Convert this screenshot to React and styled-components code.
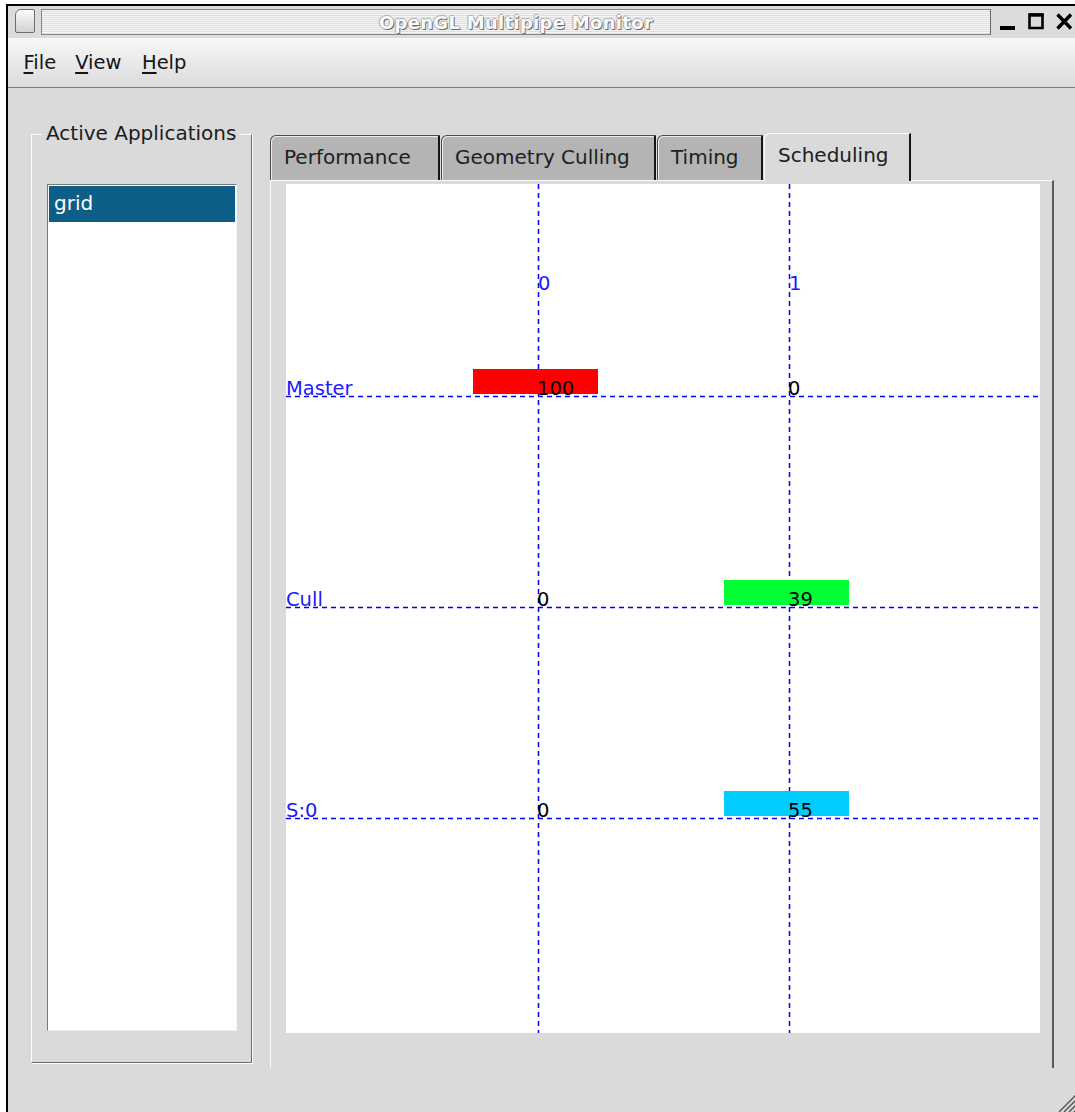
import React from "react";
import styled, { createGlobalStyle, css } from "styled-components";

const GlobalStyle = createGlobalStyle`
  html, body {
    margin: 0;
    padding: 0;
    background: #ffffff;
    overflow: hidden;
  }
  body {
    font-family: "DejaVu Sans", "Liberation Sans", sans-serif;
  }
`;

const Window = styled.div`
  position: relative;
  margin: 4px 0 0 6px;
  width: 1070px;
  height: 1108px;
  box-sizing: border-box;
  border-top: 2px solid #000;
  border-left: 2px solid #000;
  background: #dadada;
  display: flex;
  flex-direction: column;
`;

const TitleBar = styled.div`
  height: 32px;
  flex: none;
  display: flex;
  align-items: flex-start;
  padding: 3px 4px 0 7px;
  box-sizing: border-box;
  background: #dcdcdc;
`;

const WinMenuButton = styled.div`
  width: 20px;
  height: 24px;
  box-sizing: border-box;
  border: 1px solid #6d6d6d;
  border-radius: 6px 2px 2px 2px;
  background: linear-gradient(#fbfbfb, #d2d2d2);
  flex: none;
`;

const TitleField = styled.div`
  flex: 1;
  height: 26px;
  margin-left: 6px;
  box-sizing: border-box;
  border: 1px solid #868686;
  border-right-color: #6a6a6a;
  background: repeating-linear-gradient(
    to bottom,
    #f5f5f5 0px,
    #f5f5f5 1px,
    #e0e0e0 1px,
    #e0e0e0 2px
  );
  display: flex;
  align-items: center;
  justify-content: center;
`;

const TitleText = styled.span`
  font-family: "DejaVu Sans", sans-serif;
  font-weight: bold;
  font-size: 18px;
  letter-spacing: 0.3px;
  color: #fafafa;
  text-shadow: 1px 1px 0 #6a6a6a, -1px 0 0 #a8a8a8, 0 -1px 0 #b0b0b0;
`;

const WinButtons = styled.div`
  display: flex;
  gap: 12px;
  margin-left: 9px;
  margin-top: 4px;
  flex: none;
`;

const WinButton = styled.svg`
  display: block;
  width: 16px;
  height: 18px;
`;

const MenuBar = styled.div`
  height: 50px;
  flex: none;
  box-sizing: border-box;
  display: flex;
  align-items: center;
  padding-left: 6px;
  background: linear-gradient(#f7f7f7, #dcdcdc);
  border-bottom: 1px solid #7c7c7c;
`;

const MenuItem = styled.span`
  padding: 0 ${(p) => p.$pad || 9.5}px;
  font-size: 19.5px;
  color: #151515;
`;

const Mnemonic = styled.span`
  text-decoration: underline;
  text-decoration-thickness: 2px;
  text-underline-offset: 3px;
`;

const Body = styled.div`
  flex: 1;
  display: flex;
  align-items: flex-start;
  padding-left: 23px;
`;

const GroupBox = styled.div`
  position: relative;
  margin-top: 46px;
  width: 221px;
  box-sizing: border-box;
  border: 1px solid;
  border-color: #fdfdfd #6c6c6c #6c6c6c #fdfdfd;
  box-shadow: 1px 1px 0 #ffffff;
  padding: 49px 14px 31px 15px;
`;

const GroupTitle = styled.span`
  position: absolute;
  top: -14px;
  left: 10px;
  padding: 0 4px;
  background: #dadada;
  font-size: 20px;
  line-height: 24px;
  color: #1c1c1c;
  white-space: nowrap;
`;

const ListBox = styled.div`
  height: 847px;
  box-sizing: border-box;
  border: 1px solid;
  border-color: #7a7a7a #f7f7f7 #f0f0f0 #7a7a7a;
  background: #ffffff;
  padding: 1px;
`;

const ListRow = styled.div`
  height: 36px;
  line-height: 35px;
  padding-left: 5px;
  font-size: 20px;
  ${(p) =>
    p.$selected
      ? css`
          background: #0c5e86;
          color: #ffffff;
        `
      : css`
          color: #111;
        `}
`;

const TabWidget = styled.div`
  margin-top: 45px;
  margin-left: 18px;
  width: 784px;
  display: flex;
  flex-direction: column;
`;

const TabBar = styled.div`
  height: 47px;
  display: flex;
  align-items: flex-end;
  gap: 1px;
`;

const Tab = styled.div`
  width: ${(p) => p.$width}px;
  box-sizing: border-box;
  display: flex;
  align-items: center;
  padding-left: 13px;
  font-size: 20px;
  color: #202020;
  border-top-left-radius: 6px;
  border-right: 2px solid #151515;
  ${(p) =>
    p.$active
      ? css`
          position: relative;
          z-index: 1;
          height: 48px;
          margin-bottom: -1px;
          padding-bottom: 6px;
          background: #dadada;
          border-top: 1px solid #fbfbfb;
          border-left: 1px solid #fbfbfb;
        `
      : css`
          height: 45px;
          padding-bottom: 3px;
          background: #b4b4b4;
          border-top: 1px solid #4c4c4c;
          border-left: 1px solid #4c4c4c;
          box-shadow: inset 1px 1px 0 #ececec;
        `}
`;

const Pane = styled.div`
  height: 888px;
  box-sizing: border-box;
  border-top: 1px solid #fbfbfb;
  border-left: 1px solid #fbfbfb;
  border-right: 2px solid #5a5a5a;
  padding: 3px 12px 0 15px;
`;

const Chart = styled.svg`
  display: block;
  background: #ffffff;
`;

const SizeGrip = styled.svg`
  position: absolute;
  right: 0;
  bottom: 0;
  width: 18px;
  height: 20px;
`;

const TABS = [
  { name: "Performance", width: 170 },
  { name: "Geometry Culling", width: 215 },
  { name: "Timing", width: 106 },
  { name: "Scheduling", width: 147, active: true },
];

const CHART_W = 754;
const CHART_H = 849;

const COLUMNS = [
  { x: 252, label: "0" },
  { x: 503, label: "1" },
];

const ROWS = [
  { y: 212, label: "Master", values: ["100", "0"], bar: { col: 0, color: "#ff0000" } },
  { y: 423, label: "Cull", values: ["0", "39"], bar: { col: 1, color: "#00ff33" } },
  { y: 634, label: "S:0", values: ["0", "55"], bar: { col: 1, color: "#00ccff" } },
];

const GRID = "#0000ff";
const LABEL_FONT = '"DejaVu Sans", sans-serif';

function SchedulingChart() {
  return (
    <Chart width={CHART_W} height={CHART_H} viewBox={`0 0 ${CHART_W} ${CHART_H}`}>
      {COLUMNS.map((c) => (
        <line
          key={`v${c.x}`}
          x1={c.x + 0.5}
          y1={0}
          x2={c.x + 0.5}
          y2={CHART_H}
          stroke={GRID}
          strokeWidth={1.5}
          strokeDasharray="5 4"
        />
      ))}
      {ROWS.map((r) => (
        <line
          key={`h${r.y}`}
          x1={0}
          y1={r.y + 0.5}
          x2={CHART_W}
          y2={r.y + 0.5}
          stroke={GRID}
          strokeWidth={1.5}
          strokeDasharray="5 4"
        />
      ))}
      {ROWS.map((r) => (
        <rect
          key={`b${r.y}`}
          x={COLUMNS[r.bar.col].x - 65}
          y={r.y - 27}
          width={125}
          height={25}
          fill={r.bar.color}
        />
      ))}
      {COLUMNS.map((c) => (
        <text key={`c${c.x}`} x={c.x} y={106} fill="#1a1aff" fontFamily={LABEL_FONT} fontSize={19.5}>
          {c.label}
        </text>
      ))}
      {ROWS.map((r) => (
        <g key={`t${r.y}`} fontFamily={LABEL_FONT} fontSize={19.5}>
          <text x={0} y={r.y - 1} fill="#1a1aff">
            {r.label}
          </text>
          {r.values.map((v, i) => (
            <text key={i} x={COLUMNS[i].x - 1} y={r.y - 1} fill="#000000">
              {v}
            </text>
          ))}
        </g>
      ))}
    </Chart>
  );
}

export default function App() {
  return (
    <>
      <GlobalStyle />
      <Window>
        <TitleBar>
          <WinMenuButton />
          <TitleField>
            <TitleText>OpenGL Multipipe Monitor</TitleText>
          </TitleField>
          <WinButtons>
            <WinButton viewBox="0 0 16 18">
              <rect x="0" y="13" width="15" height="4" fill="#000" />
            </WinButton>
            <WinButton viewBox="0 0 16 18">
              <path d="M1.5 1.5 H14.5 V15 H1.5 Z" fill="none" stroke="#000" strokeWidth="2.6" />
              <rect x="1" y="0.5" width="14.5" height="3.2" fill="#000" />
            </WinButton>
            <WinButton viewBox="0 0 16 18">
              <path d="M1.5 1.5 L15 15.5 M15 1.5 L1.5 15.5" stroke="#000" strokeWidth="3.4" />
            </WinButton>
          </WinButtons>
        </TitleBar>

        <MenuBar>
          <MenuItem>
            <Mnemonic>F</Mnemonic>ile
          </MenuItem>
          <MenuItem>
            <Mnemonic>V</Mnemonic>iew
          </MenuItem>
          <MenuItem $pad={11}>
            <Mnemonic>H</Mnemonic>elp
          </MenuItem>
        </MenuBar>

        <Body>
          <GroupBox>
            <GroupTitle>Active Applications</GroupTitle>
            <ListBox>
              <ListRow $selected>grid</ListRow>
            </ListBox>
          </GroupBox>

          <TabWidget>
            <TabBar>
              {TABS.map((t) => (
                <Tab key={t.name} $width={t.width} $active={t.active}>
                  {t.name}
                </Tab>
              ))}
            </TabBar>
            <Pane>
              <SchedulingChart />
            </Pane>
          </TabWidget>
        </Body>

        <SizeGrip viewBox="0 0 18 20">
          <g stroke="#555" strokeWidth="1.4">
            <line x1="1" y1="20" x2="18" y2="3" />
            <line x1="6" y1="20" x2="18" y2="8" />
            <line x1="11" y1="20" x2="18" y2="13" />
            <line x1="16" y1="20" x2="18" y2="18" />
          </g>
        </SizeGrip>
      </Window>
    </>
  );
}
